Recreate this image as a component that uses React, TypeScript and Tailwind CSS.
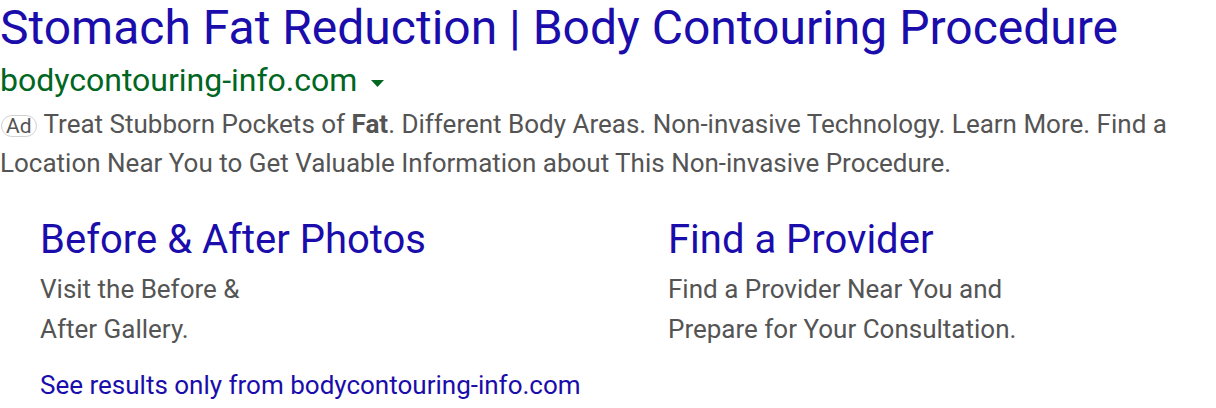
import React from "react";

export default function App() {
  return (
    <div className="w-[1216px] h-[408px] bg-white overflow-hidden" style={{ fontFamily: "Roboto, Arial, sans-serif" }}>
      <div className="text-[48px] leading-[55px] text-[#1a0dab] whitespace-nowrap">
        Stomach Fat Reduction | Body Contouring Procedure
      </div>
      <div className="mt-[3px] flex items-center h-[44px] text-[32px] leading-[44px] text-[#006621] whitespace-nowrap">
        <span>bodycontouring-info.com</span>
        <svg className="ml-[14px] mt-[7px]" width="13" height="7" viewBox="0 0 13 7">
          <polygon points="0,0 13,0 6.5,7" fill="#006621" />
        </svg>
      </div>
      <div className="mt-[3px] text-[26px] leading-[39px] text-[#545454] w-[1200px]">
        <span className="inline-block px-[4px] border border-[#d2d2d2] rounded-[11px] text-[21px] leading-[20px] mr-[7px] ml-[1px]">Ad</span>
        Treat Stubborn Pockets of <b className="font-bold">Fat</b>. Different Body Areas. Non-invasive Technology. Learn More. Find a Location Near You to Get Valuable Information about This Non-invasive Procedure.
      </div>
      <div className="flex mt-[33px] pl-[40px]">
        <div className="w-[628px]">
          <div className="text-[40px] leading-[48px] text-[#1a0dab] whitespace-nowrap">Before &amp; After Photos</div>
          <div className="mt-[5px] text-[26px] leading-[40px] text-[#545454]">
            <div>Visit the Before &amp;</div>
            <div>After Gallery.</div>
          </div>
        </div>
        <div>
          <div className="text-[40px] leading-[48px] text-[#1a0dab] whitespace-nowrap">Find a Provider</div>
          <div className="mt-[5px] text-[26px] leading-[40px] text-[#545454]">
            <div>Find a Provider Near You and</div>
            <div>Prepare for Your Consultation.</div>
          </div>
        </div>
      </div>
      <div className="mt-[16px] pl-[40px] text-[26px] leading-[40px] text-[#1a0dab] whitespace-nowrap">
        See results only from bodycontouring-info.com
      </div>
    </div>
  );
}
